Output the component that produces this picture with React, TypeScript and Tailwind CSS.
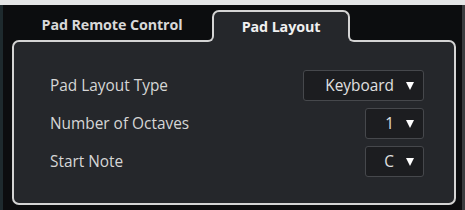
import React from 'react'

const rows = [
  { label: 'Pad Layout Type', value: 'Keyboard', wide: true },
  { label: 'Number of Octaves', value: '1', wide: false },
  { label: 'Start Note', value: 'C', wide: false },
]

function Select({ value, wide }: { value: string; wide: boolean }) {
  return (
    <div
      className={`flex h-[31px] items-center justify-end gap-[12px] rounded-[3px] border border-[#46484c] bg-[#1c1d20] pr-[9px] text-[#e0e0e0] ${
        wide ? 'w-[121px]' : 'w-[59px]'
      }`}
    >
      <span>{value}</span>
      <span className="mt-[1px] h-0 w-0 border-x-[4.5px] border-t-[8px] border-x-transparent border-t-white" />
    </div>
  )
}

export default function App() {
  return (
    <div
      className="flex h-[210px] w-[465px] flex-col bg-[#0c0d0f]"
      style={{ fontFamily: '"Open Sans", "Liberation Sans", sans-serif' }}
    >
      <div className="h-[5px] bg-[#e4e5e6]" />
      <div className="flex flex-1 flex-col border-l-[3px] border-r-[3px] border-l-[#1e2a2e] border-r-[#3a3c3f] pl-[9px] pr-[6px] pt-[5px]">
        {/* tabs */}
        <div className="flex h-[30px] items-stretch">
          <div className="flex w-[200px] items-center justify-center text-[14.3px] font-bold tracking-[-0.1px] text-[#d8d8d8]">
            Pad Remote Control
          </div>
          <div className="relative z-10 -mb-[2px] flex w-[138px] items-center justify-center rounded-t-[7px] border-2 border-b-0 border-[#d4d4d4] bg-[#25272b] text-[14.3px] font-bold tracking-[-0.1px] text-[#f0f0f0]">
            Pad Layout
            <div className="absolute bottom-0 -left-[10px] h-[8px] w-[10px] bg-[#25272b]" />
            <div className="absolute bottom-0 -left-[10px] h-[8px] w-[10px] rounded-br-[6px] border-b-2 border-r-2 border-[#d4d4d4] bg-[#0c0d0f]" />
            <div className="absolute bottom-0 -right-[10px] h-[8px] w-[10px] bg-[#25272b]" />
            <div className="absolute bottom-0 -right-[10px] h-[8px] w-[10px] rounded-bl-[6px] border-b-2 border-l-2 border-[#d4d4d4] bg-[#0c0d0f]" />
          </div>
        </div>
        {/* panel */}
        <div className="mb-[5px] flex flex-1 flex-col gap-[7px] rounded-[7px] border-2 border-[#d4d4d4] bg-[#25272b] pl-[36px] pr-[30px] pt-[28px]">
          {rows.map((r) => (
            <div key={r.label} className="flex items-center justify-between text-[15.4px] text-[#d6d6d6]">
              <span>{r.label}</span>
              <Select value={r.value} wide={r.wide} />
            </div>
          ))}
        </div>
      </div>
    </div>
  )
}
